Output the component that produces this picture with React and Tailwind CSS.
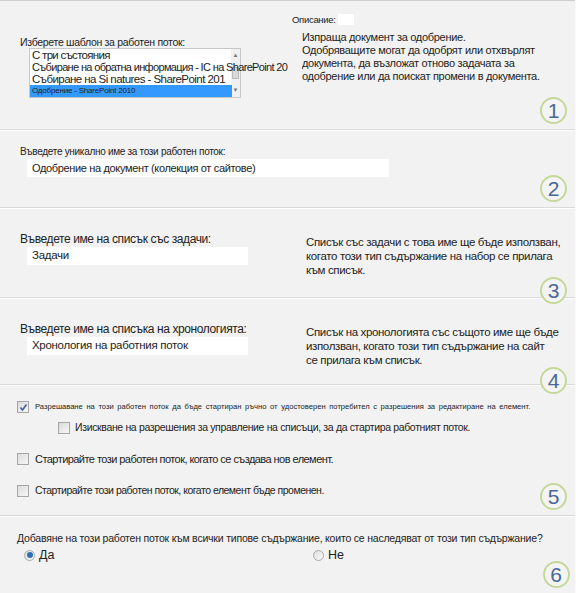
import React from "react";

function Badge({ n }) {
  return (
    <div className="w-[27px] h-[27px] rounded-full border-2 border-[#c4d89a] bg-[#f4f4f4] flex items-center justify-center text-[21px] leading-none text-[#4a679a] font-light">
      {n}
    </div>
  );
}

function TextBox({ value, width, text }) {
  return (
    <div className={`ml-[7px] h-[18px] bg-white flex items-center pl-[5px] text-[#222] ${text} ${width}`}>
      {value}
    </div>
  );
}

function Check({ checked }) {
  return (
    <div className="w-[12px] h-[12px] shrink-0 border border-[#a6a6a6] bg-gradient-to-br from-[#dcdcdc] to-[#f6f6f6] flex items-center justify-center">
      {checked && (
        <svg width="9" height="9" viewBox="0 0 9 9">
          <path d="M1.5 4.5 L3.5 7 L7.5 1.5" fill="none" stroke="#3b5fa6" strokeWidth="1.6" />
        </svg>
      )}
    </div>
  );
}

function Radio({ checked }) {
  return (
    <div className="w-[11px] h-[11px] shrink-0 rounded-full border border-[#a9a9a9] bg-gradient-to-br from-[#dedede] to-[#fafafa] flex items-center justify-center">
      {checked && <div className="w-[6px] h-[6px] rounded-full bg-[#2f6fb5]" />}
    </div>
  );
}

function Section({ className, children }) {
  return (
    <div className={`flex border-b border-[#d9d9d9] shadow-[0_1px_0_#ffffff] ${className}`}>
      {children}
    </div>
  );
}

function WorkflowTemplate() {
  return (
    <Section className="h-[130px] border-t border-t-[#cfcfcf]">
      <div className="w-[292px] pl-5 pt-[35px]">
        <div className="text-[10.5px] leading-[12px] tracking-[-0.3px]">Изберете шаблон за работен поток:</div>
        <div className="relative ml-[9px] w-[212px] h-[50px] bg-white border border-[#c8c8c8] whitespace-nowrap">
          <div className="absolute right-0 top-0 bottom-0 w-[9px] bg-[#f0f0f0] flex flex-col items-center justify-between py-[2px] text-[6px] text-[#777]">
            <span>▲</span>
            <div className="w-[7px] h-[12px] bg-[#d9d9d9] border border-[#bbb]" />
            <span>▼</span>
          </div>
          <div className="relative text-[11.5px] leading-[12px] tracking-[-0.7px] pl-[2px]">С три състояния</div>
          <div className="relative text-[11px] leading-[12px] tracking-[-0.65px] pl-[2px]">Събиране на обратна информация - IC на SharePoint 20</div>
          <div className="relative text-[11.5px] leading-[12px] tracking-[-0.55px] pl-[2px]">Събиране на Si natures - SharePoint 201</div>
          <div className="relative w-[202px] h-[12px] bg-[#3399ff] text-[8px] leading-[12px] tracking-[-0.2px] pl-[2px]">Одобрение - SharePoint 2010</div>
        </div>
      </div>
      <div className="flex-1 flex flex-col pt-[13px] pr-[8px]">
        <div className="flex items-center text-[9.5px] leading-[11px] tracking-[-0.3px]">
          Описание:
          <div className="ml-[2px] w-[16px] h-[11px] bg-white" />
        </div>
        <div className="ml-[10px] mt-[6px] text-[11px] leading-[13px] tracking-[-0.3px] whitespace-nowrap">
          Изпраща документ за одобрение.
          <br />
          Одобряващите могат да одобрят или отхвърлят
          <br />
          документа, да възложат отново задачата за
          <br />
          одобрение или да поискат промени в документа.
        </div>
        <div className="mt-auto mb-[5px] self-end">
          <Badge n="1" />
        </div>
      </div>
    </Section>
  );
}

function UniqueName() {
  return (
    <Section className="h-[78px]">
      <div className="flex-1 pl-5 pt-[16px]">
        <div className="text-[10px] leading-[12px] tracking-[-0.3px] mb-[1px]">Въведете уникално име за този работен поток:</div>
        <TextBox
          value="Одобрение на документ (колекция от сайтове)"
          width="w-[362px]"
          text="text-[11px] tracking-[-0.35px]"
        />
      </div>
      <div className="flex flex-col pr-[8px]">
        <div className="mt-auto mb-[5px]">
          <Badge n="2" />
        </div>
      </div>
    </Section>
  );
}

function ListSection({ label, value, desc, n, className }) {
  return (
    <Section className={className}>
      <div className="w-[306px] pl-5 pt-[24px]">
        <div className="text-[12px] leading-[14px] tracking-[-0.4px] mb-[1px]">{label}</div>
        <TextBox value={value} width="w-[221px]" text="text-[11.5px] tracking-[-0.3px]" />
      </div>
      <div className="flex-1 flex flex-col pt-[27px] pr-[8px]">
        <div className="text-[11.5px] leading-[14px] tracking-[-0.35px] whitespace-nowrap">{desc}</div>
        <div className="mt-auto mb-[5px] self-end">
          <Badge n={n} />
        </div>
      </div>
    </Section>
  );
}

function StartOptions() {
  return (
    <Section className="h-[131px]">
      <div className="flex-1 pl-[17px] pt-[15px] whitespace-nowrap">
        <div className="flex items-center gap-[6px] h-[14px]">
          <Check checked />
          <span className="text-[7.6px] [word-spacing:1.5px]">
            Разрешаване на този работен поток да бъде стартиран ръчно от удостоверен потребител с разрешения за редактиране на елемент.
          </span>
        </div>
        <div className="flex items-center gap-[5px] h-[14px] ml-[41px] mt-[7px]">
          <Check />
          <span className="text-[10.5px] tracking-[-0.35px]">
            Изискване на разрешения за управление на списъци, за да стартира работният поток.
          </span>
        </div>
        <div className="flex items-center gap-[6px] h-[14px] mt-[17px]">
          <Check />
          <span className="text-[11px] tracking-[-0.55px]">Стартирайте този работен поток, когато се създава нов елемент.</span>
        </div>
        <div className="flex items-center gap-[6px] h-[14px] mt-[18px]">
          <Check />
          <span className="text-[10.5px] tracking-[-0.5px]">Стартирайте този работен поток, когато елемент бъде променен.</span>
        </div>
      </div>
      <div className="flex flex-col pr-[8px]">
        <div className="mt-auto mb-[5px]">
          <Badge n="5" />
        </div>
      </div>
    </Section>
  );
}

function Inherit() {
  return (
    <Section className="h-[78px]">
      <div className="flex-1 pl-[17px] pt-[16px]">
        <div className="text-[10.5px] leading-[12px] tracking-[-0.2px] whitespace-nowrap">
          Добавяне на този работен поток към всички типове съдържание, които се наследяват от този тип съдържание?
        </div>
        <div className="flex mt-[2px] ml-[7px]">
          <label className="w-[289px] flex items-center gap-[4px] text-[12.5px]">
            <Radio checked />
            Да
          </label>
          <label className="flex items-center gap-[4px] text-[12.5px]">
            <Radio />
            Не
          </label>
        </div>
      </div>
      <div className="flex flex-col pr-[8px]">
        <div className="mt-auto mb-[5px]">
          <Badge n="6" />
        </div>
      </div>
    </Section>
  );
}

export default function App() {
  return (
    <div className="w-[576px] h-[593px] overflow-hidden bg-[#f2f2f2] text-[#222] border-r border-r-[#fafafa] font-['Liberation_Sans',Arial,sans-serif]">
      <WorkflowTemplate />
      <UniqueName />
      <ListSection
        className="h-[90px]"
        label="Въведете име на списък със задачи:"
        value="Задачи"
        desc={
          <>
            Списък със задачи с това име ще бъде използван,
            <br />
            когато този тип съдържание на набор се прилага
            <br />
            към списък.
          </>
        }
        n="3"
      />
      <ListSection
        className="h-[87px]"
        label="Въведете име на списъка на хронологията:"
        value="Хронология на работния поток"
        desc={
          <>
            Списък на хронологията със същото име ще бъде
            <br />
            използван, когато този тип съдържание на сайт
            <br />
            се прилага към списък.
          </>
        }
        n="4"
      />
      <StartOptions />
      <Inherit />
    </div>
  );
}
